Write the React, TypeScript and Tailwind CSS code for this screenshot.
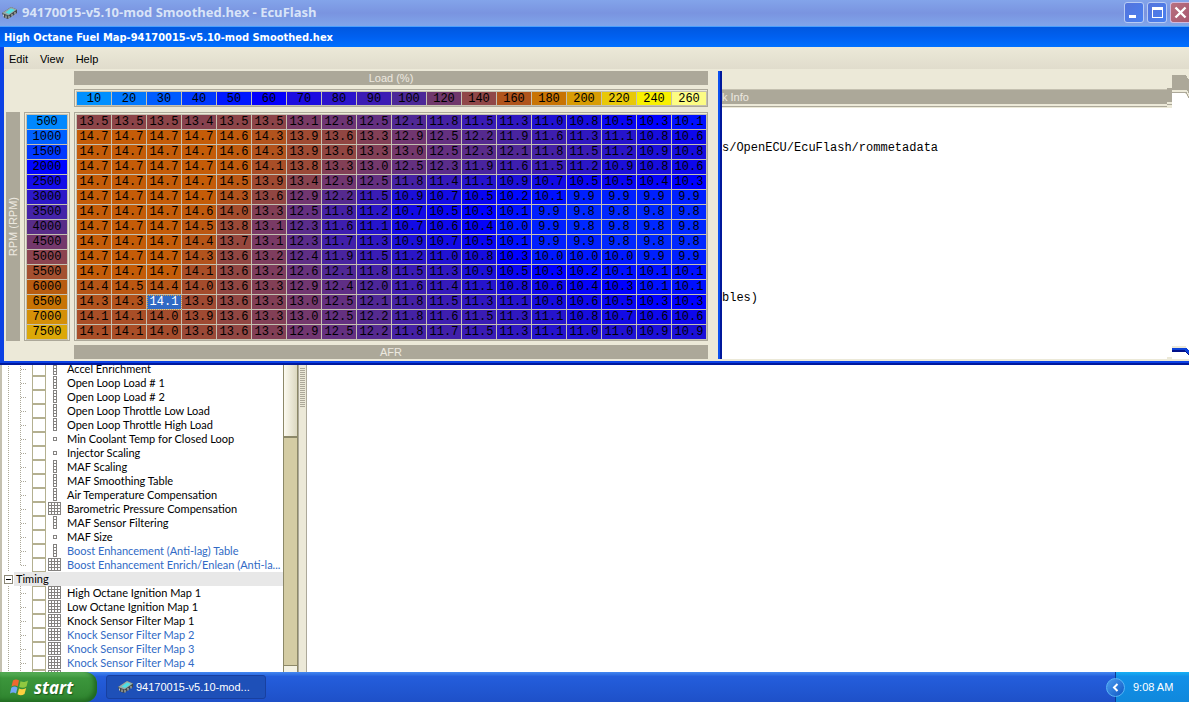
import clsx from "clsx";

const loads = [
  { value: 10, color: "#0090ff" },
  { value: 20, color: "#0078ff" },
  { value: 30, color: "#005cff" },
  { value: 40, color: "#0038ff" },
  { value: 50, color: "#0018ff" },
  { value: 60, color: "#0400fc" },
  { value: 70, color: "#1c0ce0" },
  { value: 80, color: "#2c14cc" },
  { value: 90, color: "#3c1cb4" },
  { value: 100, color: "#4c2898" },
  { value: 120, color: "#70386c" },
  { value: 140, color: "#904848" },
  { value: 160, color: "#b0541c" },
  { value: 180, color: "#c87404" },
  { value: 200, color: "#d89c04" },
  { value: 220, color: "#e8c808" },
  { value: 240, color: "#f8f000" },
  { value: 260, color: "#fcfc84" },
];

const rpms = [
  { value: 500, color: "#0088ff" },
  { value: 1000, color: "#0060ff" },
  { value: 1500, color: "#0038ff" },
  { value: 2000, color: "#0004ff" },
  { value: 2500, color: "#140ce8" },
  { value: 3000, color: "#2c18c8" },
  { value: 3500, color: "#4424a8" },
  { value: 4000, color: "#582c88" },
  { value: 4500, color: "#74386c" },
  { value: 5000, color: "#8c4450" },
  { value: 5500, color: "#a45030" },
  { value: 6000, color: "#b85c10" },
  { value: 6500, color: "#c87404" },
  { value: 7000, color: "#d49008" },
  { value: 7500, color: "#dca808" },
];

const fuelMap = [
  "13.5 13.5 13.5 13.4 13.5 13.5 13.1 12.8 12.5 12.1 11.8 11.5 11.3 11.0 10.8 10.5 10.3 10.1",
  "14.7 14.7 14.7 14.7 14.6 14.3 13.9 13.6 13.3 12.9 12.5 12.2 11.9 11.6 11.3 11.1 10.8 10.6",
  "14.7 14.7 14.7 14.7 14.6 14.3 13.9 13.6 13.3 13.0 12.5 12.3 12.1 11.8 11.5 11.2 10.9 10.8",
  "14.7 14.7 14.7 14.7 14.6 14.1 13.8 13.3 13.0 12.5 12.3 11.9 11.6 11.5 11.2 10.9 10.8 10.6",
  "14.7 14.7 14.7 14.7 14.5 13.9 13.4 12.9 12.5 11.8 11.4 11.1 10.9 10.7 10.5 10.5 10.4 10.3",
  "14.7 14.7 14.7 14.7 14.3 13.6 12.9 12.2 11.5 10.9 10.7 10.5 10.2 10.1 9.9 9.9 9.9 9.9",
  "14.7 14.7 14.7 14.6 14.0 13.3 12.5 11.8 11.2 10.7 10.5 10.3 10.1 9.9 9.8 9.8 9.8 9.8",
  "14.7 14.7 14.7 14.5 13.8 13.1 12.3 11.6 11.1 10.7 10.6 10.4 10.0 9.9 9.8 9.8 9.8 9.8",
  "14.7 14.7 14.7 14.4 13.7 13.1 12.3 11.7 11.3 10.9 10.7 10.5 10.1 9.9 9.9 9.8 9.8 9.8",
  "14.7 14.7 14.7 14.3 13.6 13.2 12.4 11.9 11.5 11.2 11.0 10.8 10.3 10.0 10.0 10.0 9.9 9.9",
  "14.7 14.7 14.7 14.1 13.6 13.2 12.6 12.1 11.8 11.5 11.3 10.9 10.5 10.3 10.2 10.1 10.1 10.1",
  "14.4 14.5 14.4 14.0 13.6 13.3 12.9 12.4 12.0 11.6 11.4 11.1 10.8 10.6 10.4 10.3 10.1 10.1",
  "14.3 14.3 14.1 13.9 13.6 13.3 13.0 12.5 12.1 11.8 11.5 11.3 11.1 10.8 10.6 10.5 10.3 10.3",
  "14.1 14.1 14.0 13.9 13.6 13.3 13.0 12.5 12.2 11.8 11.6 11.5 11.3 11.1 10.8 10.7 10.6 10.6",
  "14.1 14.1 14.0 13.8 13.6 13.3 12.9 12.5 12.2 11.8 11.7 11.5 11.3 11.1 11.0 11.0 10.9 10.9",
].map((row) => row.split(" "));

const selected = { row: 12, col: 2 };

// AFR value -> rgb, linearly blended between neighbours
const afrStops: [number, number[]][] = [
  [9.8, [0, 40, 255]],
  [10.3, [0, 0, 255]],
  [10.9, [28, 16, 216]],
  [11.5, [58, 28, 180]],
  [12.1, [80, 40, 148]],
  [12.5, [100, 48, 128]],
  [13.0, [116, 56, 108]],
  [13.5, [140, 68, 72]],
  [14.0, [164, 76, 44]],
  [14.7, [196, 92, 8]],
];

function afrColor(afr: number) {
  for (let i = 1; i < afrStops.length; i++) {
    const [lo, from] = afrStops[i - 1];
    const [hi, to] = afrStops[i];
    if (afr <= hi) {
      const t = (afr - lo) / (hi - lo);
      return `rgb(${from.map((c, n) => Math.round(c + (to[n] - c) * t)).join(",")})`;
    }
  }
  return "rgb(196,92,8)";
}

type TableKind = "column" | "dot" | "grid";

type TreeItem = { name: string; kind: TableKind; extra?: boolean };

const fuelItems: TreeItem[] = [
  { name: "Accel Enrichment", kind: "column" },
  { name: "Open Loop Load # 1", kind: "column" },
  { name: "Open Loop Load # 2", kind: "column" },
  { name: "Open Loop Throttle Low Load", kind: "column" },
  { name: "Open Loop Throttle High Load", kind: "column" },
  { name: "Min Coolant Temp for Closed Loop", kind: "dot" },
  { name: "Injector Scaling", kind: "dot" },
  { name: "MAF Scaling", kind: "column" },
  { name: "MAF Smoothing Table", kind: "column" },
  { name: "Air Temperature Compensation", kind: "column" },
  { name: "Barometric Pressure Compensation", kind: "grid" },
  { name: "MAF Sensor Filtering", kind: "column" },
  { name: "MAF Size", kind: "dot" },
  { name: "Boost Enhancement (Anti-lag) Table", kind: "column", extra: true },
  { name: "Boost Enhancement Enrich/Enlean (Anti-la...", kind: "grid", extra: true },
];

const timingItems: TreeItem[] = [
  { name: "High Octane Ignition Map 1", kind: "grid" },
  { name: "Low Octane Ignition Map 1", kind: "grid" },
  { name: "Knock Sensor Filter Map 1", kind: "grid" },
  { name: "Knock Sensor Filter Map 2", kind: "grid", extra: true },
  { name: "Knock Sensor Filter Map 3", kind: "grid", extra: true },
  { name: "Knock Sensor Filter Map 4", kind: "grid", extra: true },
];

function ChipIcon() {
  return (
    <svg width="16" height="14" viewBox="0 0 16 14" aria-hidden="true">
      <path d="M0 7L9 1l6 2.500V7L6 13l-4-1.500z" fill="#40484c" />
      <path d="M0 7L9 1l6 2.500L6.500 9.500z" fill="#98a8a8" />
      <path d="M3.500 6.500L9 2.500l4 1.500-6 4z" fill="#4ce0e4" />
      <path d="M1.500 8.500v2M4 9.500v2.500M7 10v2.500M10 8v2.500M13 6v2.500" stroke="#c8ccc4" />
    </svg>
  );
}

function KindIcon({ kind }: { kind: TableKind }) {
  const cols = kind === "grid" ? [0, 3, 6, 9] : [5];
  const rows = kind === "dot" ? [5] : [0, 3, 6, 9];
  return (
    <svg width="14" height="14" viewBox="0 0 14 14" shapeRendering="crispEdges" aria-hidden="true">
      {cols.map((x) =>
        rows.map((y) => (
          <rect
            key={`${x}-${y}`}
            x={x + 0.5}
            y={y + 0.5}
            width="3"
            height="3"
            fill="#ffffff"
            stroke="#848280"
          />
        )),
      )}
    </svg>
  );
}

function Branch({ last }: { last?: boolean }) {
  return (
    <svg
      className="shrink-0"
      width="24"
      height="14"
      viewBox="0 0 24 14"
      shapeRendering="crispEdges"
      aria-hidden="true"
    >
      <path
        d={last ? "M2.500 0V14M14.500 0V8M15 7.500H20" : "M2.500 0V14M14.500 0V14M15 7.500H20"}
        fill="none"
        stroke="#aca899"
        strokeDasharray="1 1"
      />
    </svg>
  );
}

function TreeRow({ item, last }: { item: TreeItem; last?: boolean }) {
  return (
    <li>
      <label className="flex h-3.5 items-center pl-1">
        <Branch last={last} />
        <input
          type="checkbox"
          className="ml-0.5 h-3.5 w-3.5 shrink-0 appearance-none border border-[#b4b090] bg-white"
        />
        <span className="ml-0.5 w-[19px] shrink-0">
          <KindIcon kind={item.kind} />
        </span>
        <span className={clsx("whitespace-nowrap leading-[14px]", item.extra && "text-[#316ac5]")}>
          {item.name}
        </span>
      </label>
    </li>
  );
}

function TitleBar() {
  return (
    <header className="flex h-[26px] shrink-0 items-center bg-linear-to-b from-[#83a4ea] via-[#7a94e0] to-[#80a5ea] pl-0.5">
      <ChipIcon />
      <h1 className="ml-1 flex-1 whitespace-nowrap font-['Open_Sans',sans-serif] text-[13px] font-bold text-[#d8e4f8]">
        94170015-v5.10-mod Smoothed.hex - EcuFlash
      </h1>
      <div className="mb-px flex gap-[3px]">
        <button
          aria-label="Minimize"
          className="h-[21px] w-5 rounded-[3px] border border-[#b8ccf4] bg-linear-to-br from-[#5474dc] to-[#4880f0]"
        >
          <svg width="18" height="19" viewBox="0 0 18 19" aria-hidden="true">
            <path d="M4 12h7v3H4z" fill="#ffffff" />
          </svg>
        </button>
        <button
          aria-label="Maximize"
          className="h-[21px] w-5 rounded-[3px] border border-[#b8ccf4] bg-linear-to-br from-[#5474dc] to-[#4880f0]"
        >
          <svg width="18" height="19" viewBox="0 0 18 19" shapeRendering="crispEdges" aria-hidden="true">
            <path d="M4 4h11v11H4zM5 7v7h9V7z" fill="#ffffff" fillRule="evenodd" />
          </svg>
        </button>
        <button
          aria-label="Close"
          className="h-[21px] w-[19px] rounded-l-[3px] border border-r-0 border-[#d0b8dc] bg-linear-to-br from-[#b87080] to-[#a85870]"
        >
          <svg width="18" height="19" viewBox="0 0 18 19" aria-hidden="true">
            <path d="M4.500 4.500l10 10M14.500 4.500l-10 10" stroke="#ffffff" strokeWidth="2.400" />
          </svg>
        </button>
      </div>
    </header>
  );
}

function LoadAxis() {
  return (
    <div className="border border-[#aca899] pl-px pt-px">
      <table className="border-separate border-spacing-0 border-l border-t border-[#c4c0b0] font-['Liberation_Mono',monospace] text-[12px] leading-[12px]">
        <thead>
          <tr>
            {loads.map(({ value, color }) => (
              <th
                key={value}
                scope="col"
                className="h-3.5 w-[35px] min-w-[35px] border-b border-r border-[#c4c0b0] p-0 pt-px text-center font-normal"
                style={{ backgroundColor: color }}
              >
                {value}
              </th>
            ))}
          </tr>
        </thead>
      </table>
    </div>
  );
}

function RpmAxis() {
  return (
    <div className="border border-[#aca899] pl-px pt-px">
      <table className="border-separate border-spacing-0 border-l border-t border-[#c4c0b0] font-['Liberation_Mono',monospace] text-[12px] leading-[14px]">
        <tbody>
          {rpms.map(({ value, color }) => (
            <tr key={value}>
              <th
                scope="row"
                className="h-[15px] w-[41px] min-w-[41px] border-b border-r border-[#c4c0b0] p-0 text-center font-normal"
                style={{ backgroundColor: color }}
              >
                {value}
              </th>
            </tr>
          ))}
        </tbody>
      </table>
    </div>
  );
}

function FuelTable() {
  return (
    <div className="border border-[#aca899] pl-px pt-px">
      <table className="border-separate border-spacing-0 border-l border-t border-[#c4c0b0] font-['Liberation_Mono',monospace] text-[12px] leading-[14px]">
        <tbody>
          {fuelMap.map((row, r) => (
            <tr key={rpms[r].value}>
              {row.map((afr, c) => {
                const active = r === selected.row && c === selected.col;
                return (
                  <td
                    key={loads[c].value}
                    className={clsx(
                      "h-[15px] w-[35px] min-w-[35px] border-b border-r border-[#c4c0b0] p-0 text-center",
                      active && "text-white outline-1 -outline-offset-1 outline-dotted outline-[#ce953a]",
                    )}
                    style={{ backgroundColor: active ? "#316ac5" : afrColor(Number(afr)) }}
                  >
                    {afr}
                  </td>
                );
              })}
            </tr>
          ))}
        </tbody>
      </table>
    </div>
  );
}

function MapEditor() {
  return (
    <div className="grid shrink-0 grid-cols-[14px_46px_634px] grid-rows-[14px_19px_229px_14px] gap-1 pl-0.5 pr-2.5 text-[#ece9e0]">
      <div className="col-start-3 bg-[#aca899] text-center leading-[14px]">Load (%)</div>
      <div className="col-start-3 text-black">
        <LoadAxis />
      </div>
      <div className="flex items-center justify-center bg-[#aca899]">
        <span className="rotate-180 whitespace-nowrap leading-[14px] [writing-mode:vertical-rl]">
          RPM (RPM)
        </span>
      </div>
      <div className="text-black">
        <RpmAxis />
      </div>
      <div className="text-black">
        <FuelTable />
      </div>
      <div className="col-start-3 bg-[#aca899] text-center leading-[14px]">AFR</div>
    </div>
  );
}

function InfoPane() {
  return (
    <div className="relative flex min-w-0 flex-1 flex-col overflow-hidden border-l-2 border-[#00189c] bg-white">
      <div className="h-[18px] bg-[#ece9d8]" />
      <div className="h-[15px] whitespace-nowrap border-t border-[#c4c0b0] bg-[#aca899] leading-[15px] text-[#ece9e0]">
        k Info
      </div>
      <div className="h-1 border-b border-[#ece9d8] bg-[#ece9d8] pt-0.5">
        <div className="h-px bg-[#aca899]" />
      </div>
      <pre className="pt-[33px] font-['Liberation_Mono',monospace] text-[12px] leading-[15px] text-black">
        {"s/OpenECU/EcuFlash/rommetadata" + "\n".repeat(10) + "bles)"}
      </pre>
      {/* leftover corner of the window behind */}
      <svg
        className="absolute right-0 top-0"
        width="22"
        height="288"
        viewBox="0 0 22 288"
        shapeRendering="crispEdges"
        aria-hidden="true"
      >
        <path d="M0 16h5v-12h17v33H0z" fill="#ece9d8" />
        <path d="M5 19h17v18H5z" fill="#ffffff" />
        <path d="M0 17h5V4h14l3 5v14l-3-4H5v12H0z" fill="#aca899" />
        <path d="M0 32h5v4H0z" fill="#ece9d8" />
        <path d="M0 33.500h5" stroke="#aca899" />
        <path d="M5 20.500h14l3 5" fill="none" stroke="#ece9d8" strokeWidth="3" />
        <path d="M5 21.500h14l3 5" fill="none" stroke="#aca899" />
        <path d="M5 275h14v2H5zM0 286h5v2H0z" fill="#ece9d8" />
        <path d="M5 277h15l2 3v5l-4-4H5z" fill="#0b41d8" />
        <path d="M5 279h13l4 5v1l-4-4H5z" fill="#00108c" />
      </svg>
    </div>
  );
}

function MapWindow() {
  return (
    <section className="shrink-0 border-b-2 border-[#00189c]">
      <h2 className="h-[21px] whitespace-nowrap border-t border-[#4ca0fc] bg-linear-to-b from-[#0058e0] via-[#0060f0] to-[#0070ff] pl-1 font-['DejaVu_Sans_Condensed','DejaVu_Sans',sans-serif] text-[11px] font-bold leading-[22px] text-white">
        High Octane Fuel Map-94170015-v5.10-mod Smoothed.hex
      </h2>
      <div className="border-b-2 border-l-4 border-[#0b41e4] bg-[#ece9d8]">
        <nav className="mb-0.5 flex h-[22px] items-center gap-3 bg-linear-to-b from-[#ece9d8] to-[#e0dccc] pl-[5px] pt-0.5">
          <button>Edit</button>
          <button>View</button>
          <button>Help</button>
        </nav>
        <div className="mb-0.5 flex">
          <MapEditor />
          <div className="w-0.5 bg-[#0b50f0]" />
          <InfoPane />
        </div>
      </div>
    </section>
  );
}

function TableTree() {
  return (
    <aside className="flex w-[298px] shrink-0 overflow-hidden border-l-2 border-[#c4c0b0] font-['Lato',sans-serif]">
      <div className="-mt-[3px] w-[281px] overflow-hidden">
        <ul>
          {fuelItems.map((item, i) => (
            <TreeRow key={item.name} item={item} last={i === fuelItems.length - 1} />
          ))}
        </ul>
        <div className="flex h-3.5 items-center pl-0.5">
          <button
            aria-label="Collapse Timing"
            className="flex h-[9px] w-[9px] items-center justify-center border border-[#8c8878] bg-white"
          >
            <span className="h-px w-[5px] bg-black" />
          </button>
          <span className="ml-px flex-1 bg-[#e8e8e8] pl-0.5 leading-[14px]">Timing</span>
        </div>
        <ul>
          {timingItems.map((item) => (
            <TreeRow key={item.name} item={item} />
          ))}
          <TreeRow item={{ name: "", kind: "grid" }} />
        </ul>
      </div>
      <div className="flex w-[15px] shrink-0 flex-col border-x border-[#8c8868] bg-[#d4cca4]">
        <div className="h-[73px] border-b-2 border-[#8c8868] bg-linear-to-r from-[#fcfaf0] to-[#dcd8c0]" />
        <div className="mt-auto h-[7px] border-t border-[#8c8868] bg-[#f4f2e4]" />
      </div>
    </aside>
  );
}

function Splitter() {
  return (
    <div className="flex w-[9px] shrink-0 flex-col items-center border-x border-[#aca899] bg-[#ece9d8] pt-[3px]">
      <svg width="5" height="40" viewBox="0 0 5 40" shapeRendering="crispEdges" aria-hidden="true">
        <path d="M2.500 0V40" stroke="#aca899" strokeWidth="5" strokeDasharray="1 1" />
      </svg>
    </div>
  );
}

function Taskbar() {
  return (
    <footer className="flex h-[30px] shrink-0 bg-linear-to-b from-[#4488f0] via-[#245edc] via-15% to-[#1e50c8] text-white">
      <button className="flex w-[97px] items-center rounded-r-xl bg-linear-to-b from-[#5cb45c] via-[#3c963c] via-20% to-[#2f842f] pl-2.5 shadow-[inset_-3px_-2px_4px_#206820]">
        <svg width="20" height="20" viewBox="0 0 20 20" aria-hidden="true">
          <path d="M3 3.500C5 2 7 2 9 3.500L7.700 9.500C6 8 4 8 1.500 9.500z" fill="#f06830" />
          <path d="M10.500 4.200C13 5.500 15 5.200 18 3.500L16.500 9.500C14 11 12 11 9.200 10z" fill="#90c840" />
          <path d="M1.300 10.700C3.500 9.200 5.500 9.200 7.500 10.700L6 16.500C4 15 2 15.200 0 16.500z" fill="#70a8f8" />
          <path d="M9 11.500C11 12.500 13.500 12.500 16.200 11L14.500 17C12 18.500 10 18.500 7.500 17.300z" fill="#fcd040" />
        </svg>
        <span className="ml-1 font-['Open_Sans',sans-serif] text-[17px] font-bold italic leading-none [text-shadow:1px_1px_1px_#1c5c1c]">
          start
        </span>
      </button>
      <button className="my-[3px] ml-[9px] flex w-40 items-center rounded-[3px] border border-[#1840a0] bg-[#1e50b8] pl-[11px]">
        <ChipIcon />
        <span className="ml-0.5 whitespace-nowrap">94170015-v5.10-mod...</span>
      </button>
      <div className="ml-auto flex w-[74px] items-center border-l border-[#0c3c94] bg-linear-to-b from-[#18b0f4] via-[#1290e8] via-15% to-[#1088dc]">
        <button
          aria-label="Show hidden icons"
          className="-ml-2.5 flex h-[19px] w-[19px] items-center justify-center rounded-full border border-[#58b4f4] bg-linear-to-br from-[#4c9cf0] to-[#0c58c4]"
        >
          <svg width="9" height="9" viewBox="0 0 9 9" fill="none" aria-hidden="true">
            <path d="M6.500 1L3 4.500L6.500 8" stroke="#ffffff" strokeWidth="2" />
          </svg>
        </button>
        <time className="ml-2 whitespace-nowrap">9:08 AM</time>
      </div>
    </footer>
  );
}

export default function App() {
  return (
    <div className="flex h-screen flex-col overflow-hidden bg-white font-['Liberation_Sans',sans-serif] text-[11px] text-black">
      <TitleBar />
      <MapWindow />
      <main className="flex min-h-0 flex-1">
        <TableTree />
        <Splitter />
        <div className="flex-1 bg-white" />
      </main>
      <Taskbar />
    </div>
  );
}
